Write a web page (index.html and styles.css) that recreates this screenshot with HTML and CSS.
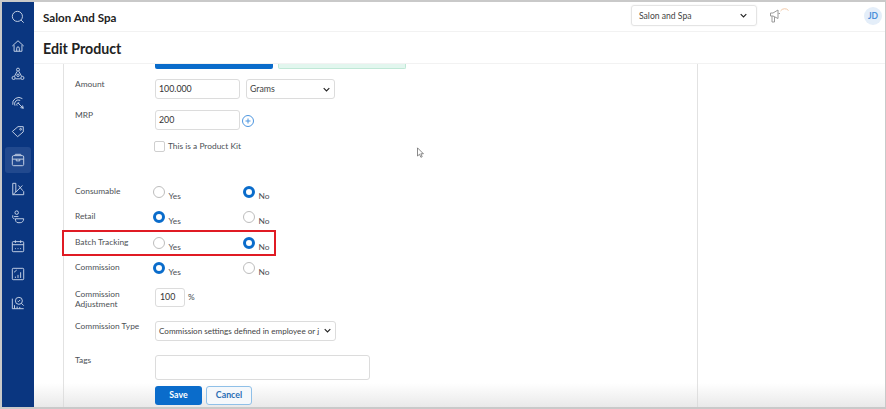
FILE: index.html
```html
<!DOCTYPE html>
<html lang="en">
<head>
<meta charset="utf-8">
<title>Edit Product</title>
<link rel="stylesheet" href="styles.css">
</head>
<body>
<div class="frame">
  <nav class="sidebar">
    <svg class="nav-icon" viewBox="0 0 16 16"><circle cx="7.300" cy="7.300" r="5.800"/><path d="M11.500 11.500l3 3"/></svg>
    <svg class="nav-icon" viewBox="0 0 16 16"><path d="M1.500 8L8 2l6.500 6M3.500 7v7h9V7M6.500 14v-3.500a1.500 1.500 0 0 1 3 0V14"/></svg>
    <svg class="nav-icon" viewBox="0 0 16 16"><circle cx="8" cy="3" r="1.700"/><circle cx="3" cy="12.500" r="1.800"/><circle cx="13" cy="12.500" r="1.800"/><circle cx="8" cy="9.500" r="1.400"/><path d="M7 5l-3 5.500M9 5l3 5.500M5 13.500h6"/></svg>
    <svg class="nav-icon" viewBox="0 0 16 16"><path d="M2 10a7 7 0 0 1 11-7M4.500 11a4.500 4.500 0 0 1 6-6M7 11a2 2 0 0 1 2.500-3M8 8l6 6M14 14l-.8-3.200M14 14l-3.200-.8"/></svg>
    <svg class="nav-icon" viewBox="0 0 16 16"><path d="M1.500 8.500L8 3h6v6l-6.500 5.500z"/><circle cx="11" cy="6" r="1"/></svg>
    <div class="nav-active"><svg class="nav-icon" viewBox="0 0 16 16"><rect x="1.500" y="3" width="13" height="11.500" rx="1.500"/><path d="M1.500 7h13M6 7v2h4V7M4 3l1-1.500h6L12 3"/></svg></div>
    <svg class="nav-icon" viewBox="0 0 16 16"><path d="M2 1.500h3.500v10L2 14.500zM2 14.500h12.500v-4M5.500 11.500L13 4M8.500 4l5 6"/></svg>
    <svg class="nav-icon" viewBox="0 0 16 16"><circle cx="6.500" cy="3" r="2"/><path d="M3.500 7.500h5M2 6v2.500C2 9.500 3 10 4 10M5 10h9.500c0 2.500-1.500 4.500-4 4.500H8C6 14.500 5 12.500 5 10z"/></svg>
    <svg class="nav-icon" viewBox="0 0 16 16"><rect x="1.500" y="3" width="13" height="11.500" rx="1"/><path d="M1.500 6.500h13M5 1.500v3M11 1.500v3M4.500 11h1M7.500 11h1M10.500 11h1"/></svg>
    <svg class="nav-icon" viewBox="0 0 16 16"><rect x="1.500" y="1.500" width="13" height="13" rx="1"/><path d="M3.500 6l3-2.500M5 12.500V11M8 12.500V9M11 12.500V6"/></svg>
    <svg class="nav-icon" viewBox="0 0 16 16"><circle cx="9" cy="5.500" r="4"/><path d="M12 8.500l2.500 2.500M1.500 3v11.500h13M4 14.500v-4M7 14.500v-2.500M10 14.500v-2M7.500 5.500l1 1 2-2"/></svg>
  </nav>
  <div class="main">
    <header class="topbar">
      <span class="org">Salon And Spa</span>
      <div class="org-select"><span>Salon and Spa</span><svg class="chev" viewBox="0 0 10 6"><path d="M1 1l4 4 4-4"/></svg></div>
      <svg class="megaphone" viewBox="0 0 22 16"><path d="M1.500 5h2.500l5-3v8.500l-5-2.500H1.500zM3 8v6h2.500V9M9.500 5.500h1.500"/><path class="spin" d="M11.500 3a5 5 0 0 1 8-.5"/></svg>
      <span class="avatar">JD</span>
    </header>
    <div class="titlebar"><h1>Edit Product</h1></div>
    <div class="content">
      <form class="panel">
        <div class="stubs"><span class="stub-blue"></span><span class="stub-green"></span></div>
        <div class="row row-amount">
          <label>Amount</label>
          <div class="ctrl"><span class="input w85">100.000</span><span class="input select w89">Grams<svg class="chev" viewBox="0 0 10 6"><path d="M1 1l4 4 4-4"/></svg></span></div>
        </div>
        <div class="row row-mrp">
          <label>MRP</label>
          <div class="ctrl"><span class="input w85">200</span>
            <svg class="plus" viewBox="0 0 14 14"><circle cx="7" cy="7" r="5.500"/><path d="M7 4.500v5M4.500 7h5"/></svg></div>
        </div>
        <div class="row row-kit">
          <label></label>
          <div class="ctrl"><span class="check"></span><span class="kit-text">This is a Product Kit</span></div>
        </div>
        <div class="row radio-row first">
          <label>Consumable</label>
          <div class="opts"><span class="opt"><i class="radio"></i><em>Yes</em></span><span class="opt"><i class="radio on"></i><em>No</em></span></div>
        </div>
        <div class="row radio-row">
          <label>Retail</label>
          <div class="opts"><span class="opt"><i class="radio on"></i><em>Yes</em></span><span class="opt"><i class="radio"></i><em>No</em></span></div>
        </div>
        <div class="row radio-row">
          <label>Batch Tracking</label>
          <div class="opts"><span class="opt"><i class="radio"></i><em>Yes</em></span><span class="opt"><i class="radio on"></i><em>No</em></span></div>
          <span class="highlight"></span>
        </div>
        <div class="row radio-row">
          <label>Commission</label>
          <div class="opts"><span class="opt"><i class="radio on"></i><em>Yes</em></span><span class="opt"><i class="radio"></i><em>No</em></span></div>
        </div>
        <div class="row row-adj">
          <label>Commission<br>Adjustment</label>
          <div class="ctrl"><span class="input w30">100</span><span class="pct">%</span></div>
        </div>
        <div class="row row-type">
          <label>Commission Type</label>
          <div class="ctrl"><span class="input select w181"><span class="clip">Commission settings defined in employee or j</span><svg class="chev" viewBox="0 0 10 6"><path d="M1 1l4 4 4-4"/></svg></span></div>
        </div>
        <div class="row row-tags">
          <label>Tags</label>
          <div class="ctrl"><span class="input tags"></span></div>
        </div>
        <div class="row row-actions">
          <label></label>
          <div class="ctrl"><span class="btn save">Save</span><span class="btn cancel">Cancel</span></div>
        </div>
      </form>
      <div class="fade"></div>
      <svg class="cursor" viewBox="0 0 10 14"><path d="M1.500 1v9.500l2.300-2 1.700 3.500 1.500-.7-1.600-3.400h3z"/></svg>
    </div>
  </div>
</div>
</body>
</html>
```
FILE: styles.css
```css
* { box-sizing: border-box; }
html, body { margin: 0; height: 100%; overflow: hidden; }
body { font-family: Lato, "Open Sans", sans-serif; color: #4a4f55; }
.frame { width: 886px; height: 409px; display: flex; background: #fff; border: solid #c9c9c9; border-width: 2px 1px 2px 2px; }
.sidebar { width: 32px; flex: none; background: #0a3680; display: flex; flex-direction: column; align-items: center; padding-top: 8px; gap: 14.600px; }
.nav-icon { width: 14px; height: 14px; flex: none; fill: none; stroke: #c6d2e6; stroke-width: 1.100; display: block; }
.nav-active { width: 26px; height: 26px; flex: none; margin: -6px 0; background: #21498e; border-radius: 3px; display: flex; align-items: center; justify-content: center; }
.main { flex: 1; min-width: 0; display: flex; flex-direction: column; }
.topbar { height: 30px; flex: none; display: flex; align-items: center; padding: 0 3px 0 9px; border-bottom: 1px solid #f2f2f2; }
.org { font-size: 11.600px; font-weight: 700; color: #222; flex: 1; padding-top: 2px; }
.org-select { width: 126px; height: 21px; margin-bottom: 2px; border: 1px solid #e4e4e4; border-radius: 3px; display: flex; align-items: center; justify-content: space-between; padding: 0 9px 0 7px; font-size: 8.600px; color: #444; box-shadow: 0 0 2px #eee; }
.chev { width: 7px; height: 5px; fill: none; stroke: #222; stroke-width: 1.600; flex: none; }
.megaphone { width: 22px; height: 16px; margin-left: 12px; margin-right: 73px; margin-bottom: 2px; fill: none; stroke: #9a9a9a; stroke-width: 1; }
.megaphone .spin { stroke: #f1c9a8; }
.avatar { width: 18px; height: 18px; margin-bottom: 1px; border-radius: 50%; background: #e4eef9; color: #4a90d9; font-size: 8.500px; font-weight: 700; display: flex; align-items: center; justify-content: center; }
.titlebar { height: 32px; flex: none; display: flex; align-items: center; padding: 1px 0 0 9px; border-bottom: 1px solid #f2f2f2; }
h1 { margin: 0; font-size: 14.200px; font-weight: 700; color: #222; }
.content { flex: 1; position: relative; overflow: hidden; padding-left: 29px; }
.panel { width: 635px; height: 100%; border: solid #e2e2e2; border-width: 0 1px; padding-left: 11px; }
.stubs { display: flex; gap: 5px; margin-left: 80px; height: 5px; }
.stub-blue { width: 118px; background: #0a6ccb; border-radius: 0 0 2px 2px; }
.stub-green { width: 128px; background: #e2f6ee; border: 1px solid #bfe8d6; border-top: 0; border-radius: 0 0 2px 2px; }
.row { display: flex; position: relative; font-size: 8.400px; line-height: 10px; }
.row label { width: 80px; flex: none; color: #4d5156; }
.ctrl { display: flex; align-items: center; }
.input { height: 20px; border: 1px solid #dcdcdc; border-radius: 3px; display: flex; align-items: center; padding: 0 3px; font-size: 8.800px; color: #333; background: #fff; }
.w85 { width: 85px; }
.w89 { width: 89px; margin-left: 6px; justify-content: space-between; color: #444; padding-right: 4px; }
.w30 { width: 30px; height: 19px; padding-left: 4px; }
.w181 { width: 181px; justify-content: space-between; gap: 2px; padding-right: 4px; font-size: 8.100px; color: #444; }
.clip { white-space: nowrap; flex: 1; }
.row-amount { margin-top: 10px; height: 20px; }
.row-mrp { margin-top: 11px; height: 20px; }
.plus { width: 14px; height: 14px; margin-left: 1px; margin-top: 1px; fill: none; stroke: #4d96e0; stroke-width: 1; }
.row-kit { margin-top: 10px; height: 12px; }
.check { width: 11px; height: 11px; border: 1px solid #cfcfcf; border-radius: 2px; margin-left: -1px; }
.kit-text { margin-left: 3px; }
.radio-row { height: 25.400px; align-items: flex-start; }
.radio-row.first { margin-top: 34px; }
.opts { display: flex; margin-left: -2.500px; }
.opt { width: 90px; display: flex; align-items: flex-start; }
.opt em { font-style: normal; margin-left: 4px; margin-top: 5px; color: #4d5156; }
.radio { width: 12px; height: 12px; border-radius: 50%; border: 1px solid #bdbdbd; flex: none; background: #fff; }
.radio.on { border: 3.500px solid #0a6ccb; }
.highlight { position: absolute; left: -13px; top: -7px; width: 214px; height: 26px; border: 2px solid #e01b24; pointer-events: none; }
.row-adj { margin-top: -0.600px; height: 24px; align-items: flex-start; padding-top: 1px; }
.row-adj label { padding-top: 1px; }
.pct { margin-left: 3px; }
.row-type { margin-top: 10px; height: 20px; }
.row-tags { margin-top: 14px; height: 25px; }
.row-tags .ctrl { align-items: stretch; }
.tags { width: 215px; height: 25px; }
.row-actions { margin-top: 6px; z-index: 1; }
.btn { width: 47px; height: 19px; border-radius: 3px; font-size: 8.800px; font-weight: 700; display: flex; align-items: center; justify-content: center; }
.save { background: #0a6ccb; color: #fff; }
.cancel { width: 46px; margin-left: 4px; border: 1px solid #8fc0e8; color: #2a6fb5; background: #f5f8fb; }
.fade { position: absolute; left: 0; right: 0; bottom: 0; height: 24px; background: linear-gradient(rgba(225,225,225,0), rgba(215,215,215,.55)); pointer-events: none; }
.cursor { position: absolute; left: 382px; top: 83px; width: 9px; height: 12px; fill: #fff; stroke: #555; stroke-width: .8; }
```
